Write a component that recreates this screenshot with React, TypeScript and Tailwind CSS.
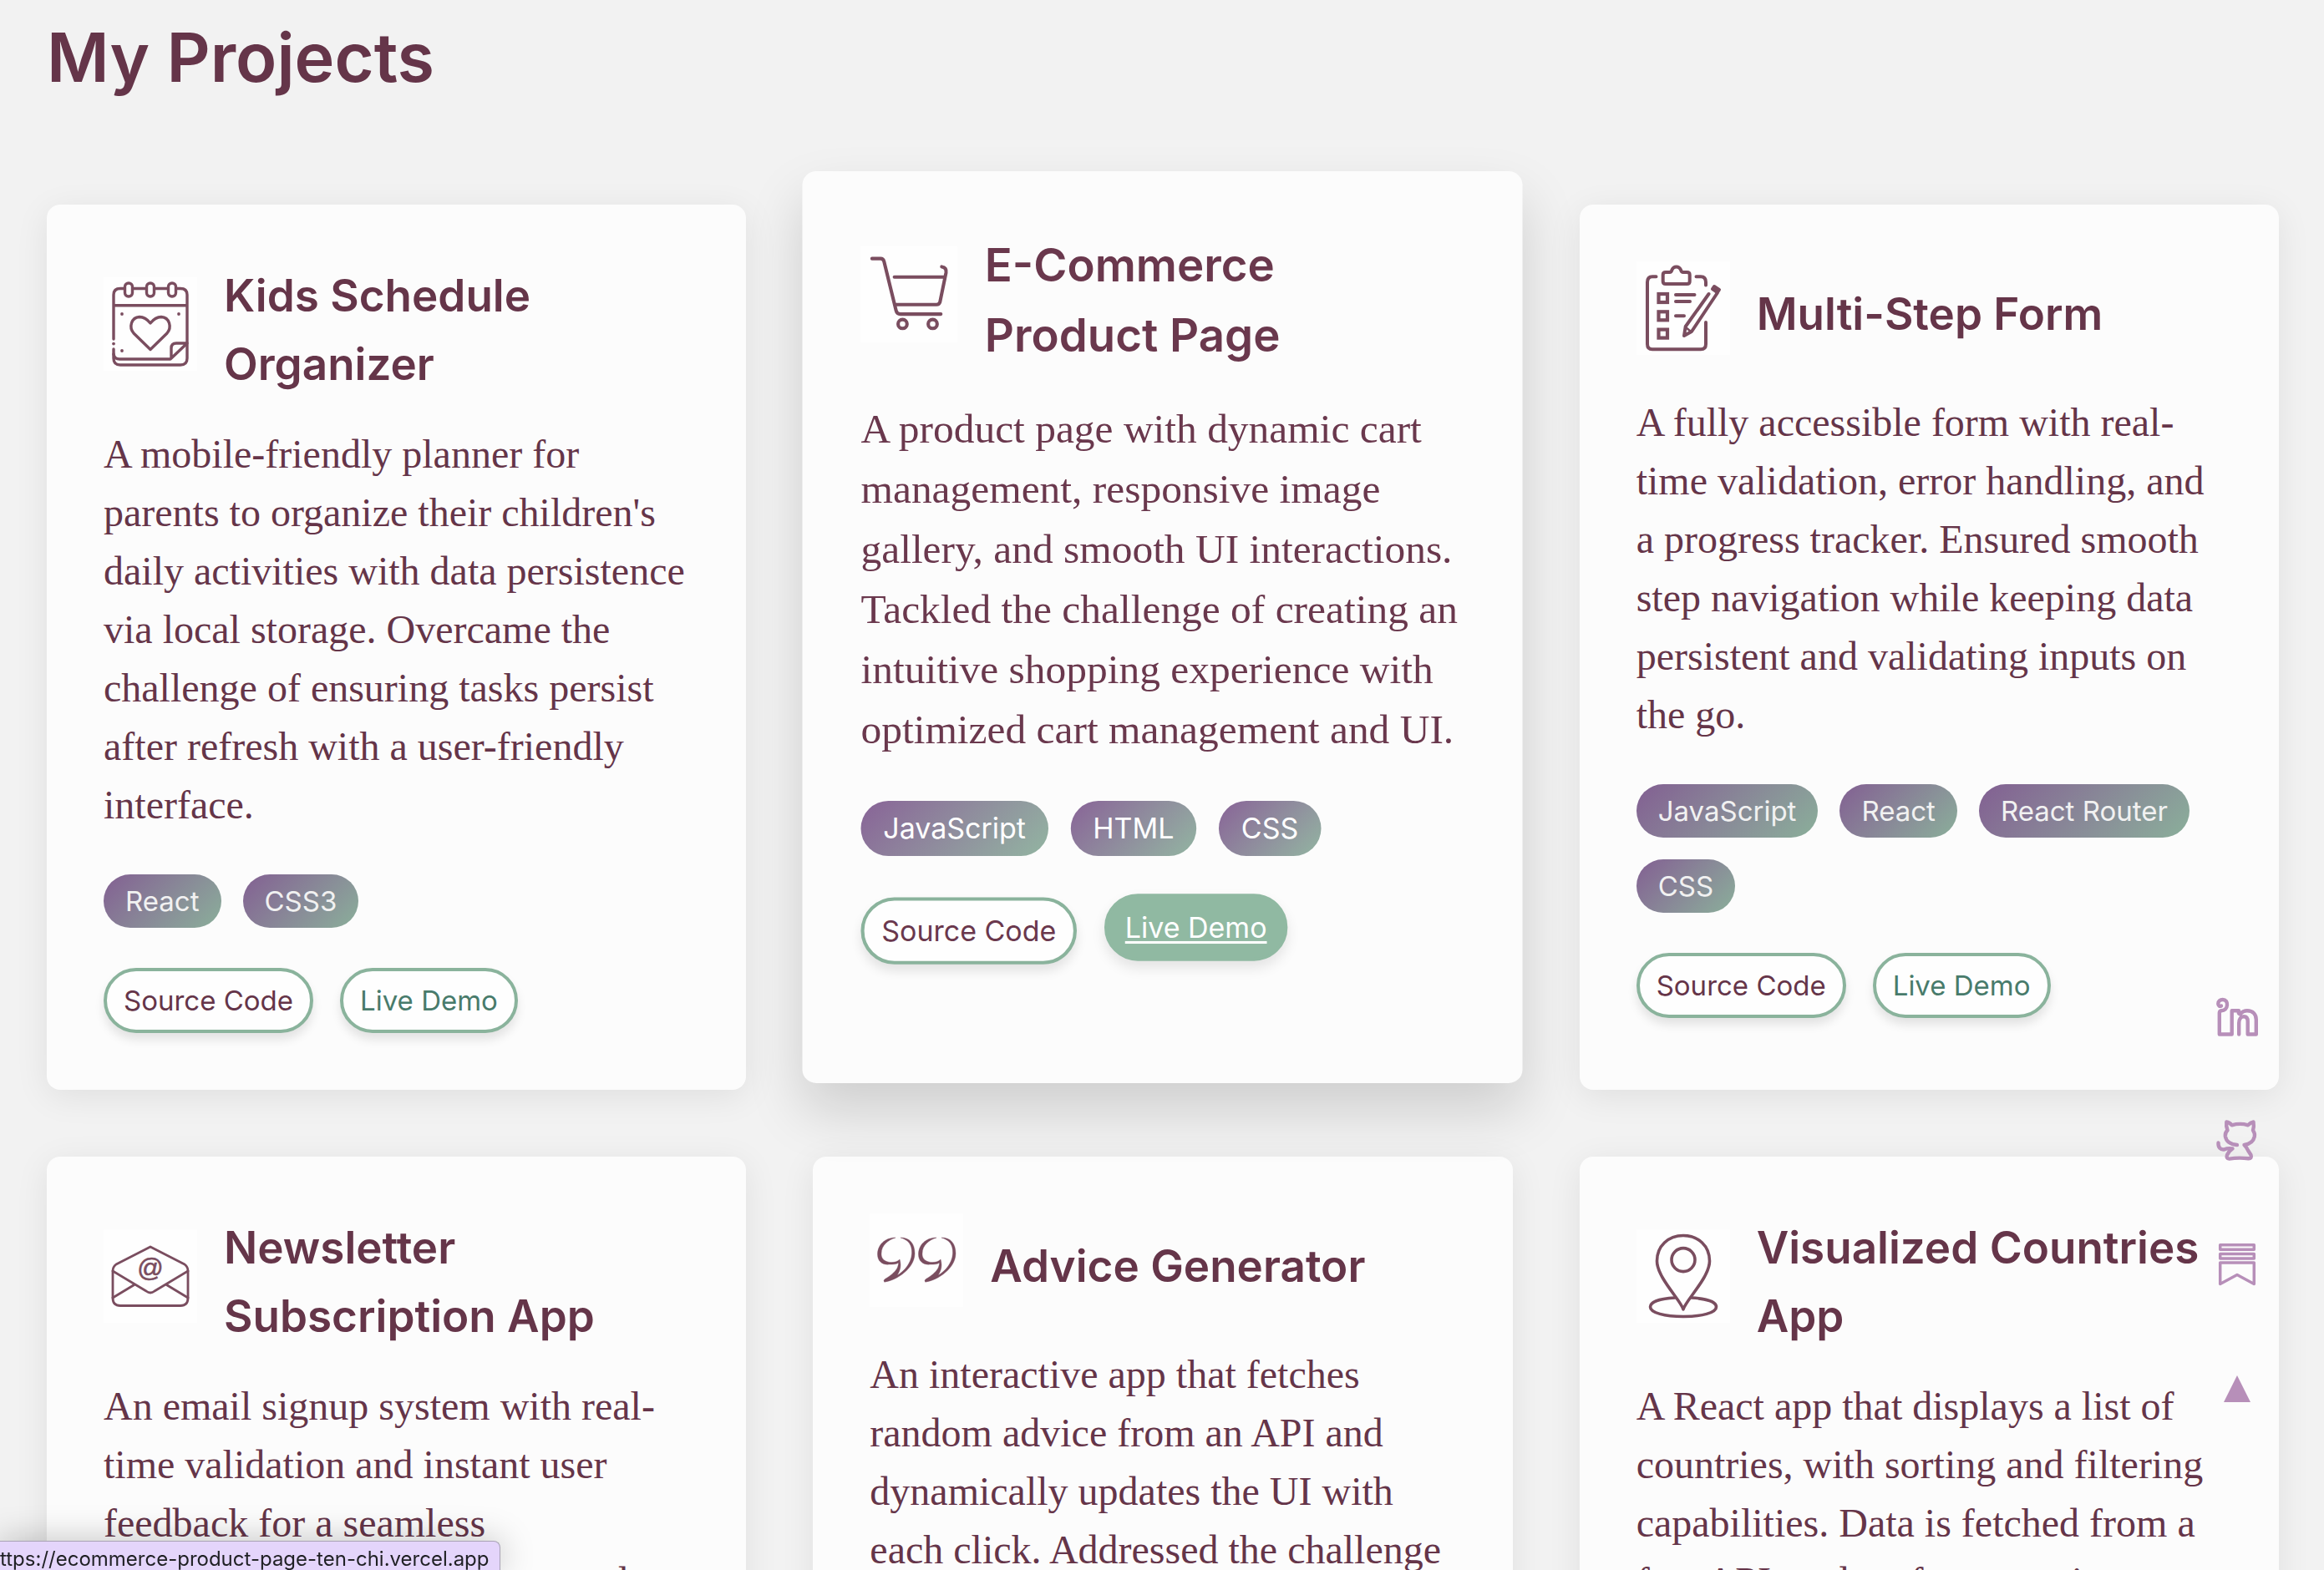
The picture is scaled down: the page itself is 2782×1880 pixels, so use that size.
import type { ReactNode } from "react";

type Project = {
  title: string;
  icon: ReactNode;
  description: string;
  tags: string[];
  active?: boolean;
};

function Glyph({ children }: { children: ReactNode }) {
  return (
    <svg
      viewBox="0 0 112 112"
      className="mb-3.5 size-28 shrink-0 bg-[#fefefe] text-[#7a4d5f]"
      fill="none"
      stroke="currentColor"
      strokeWidth="3.4"
      strokeLinecap="round"
      strokeLinejoin="round"
      aria-hidden="true"
    >
      {children}
    </svg>
  );
}

const calendar = (
  <Glyph>
    <path d="M12 74V21Q12 13.5 20 13.5H25M35 13.5H51M61 13.5H77M87 13.5H92Q100 13.5 100 21V97Q100 105 92 105H20Q12 105 12 97V86M12 33.7H100" />
    <rect x="25.500" y="7" width="9" height="16" rx="4.500" />
    <rect x="51.500" y="7" width="9" height="16" rx="4.500" />
    <rect x="77.500" y="7" width="9" height="16" rx="4.500" />
    <path d="M56 55Q50 47.500 43 47.500C33 48 30 60 36 67L56 86.500L76 67C82 60 79 48 69 47.500Q62 47.500 56 55Z" />
    <path d="M12 92Q13 98 19 98H80L100 79H87Q81 79 81 85V97" />
    <g fill="currentColor" stroke="none">
      <circle cx="12" cy="79.600" r="1.900" />
      <circle cx="22" cy="44" r="1.900" />
      <circle cx="90" cy="44" r="1.900" />
      <circle cx="22" cy="88" r="1.900" />
    </g>
  </Glyph>
);

const cart = (
  <Glyph>
    <g strokeWidth="4">
      <path d="M13 14.500H23Q26 14.500 27 18L41 75Q42 79 46 79H93" />
      <path d="M39 36H98M94 24Q100 25 99 31L92 65Q91 68 88 68H40" />
      <circle cx="48.500" cy="90.500" r="5.200" />
      <circle cx="83.500" cy="90.500" r="5.200" />
    </g>
  </Glyph>
);

const clipboard = (
  <Glyph>
    <g strokeWidth="4">
      <path d="M23.500 18.300H19Q13 18.300 13 25V99Q13 105.300 19 105.300H77Q83 105.300 83 99V73M71.500 18.300H77Q83 18.300 83 25V28.500" />
      <path d="M35 13H39.500Q42 13 42.500 10Q44 6.500 47.700 6.500T53 10Q53.500 13 56 13H60.500Q63.700 13 63.700 16V24Q63.700 27 60.500 27H35Q31.700 27 31.700 24V16Q31.700 13 35 13Z" />
      <path d="M47 40H69.500M47 48H64M47 65.300H57" />
      <path d="M86.500 39L58.700 78L57 89L66 84L96 39" />
      <path d="M59 79L65 84" strokeWidth="2.500" />
      <path d="M91 33L93 30L99 34L97 37ZM91 33L97 37.500" strokeWidth="4" />
    </g>
    <g strokeLinejoin="miter" strokeWidth="4.200">
      <rect x="26.500" y="39" width="10.500" height="10" />
      <rect x="26.500" y="60.300" width="10.500" height="10" />
      <rect x="26.500" y="81.600" width="10.500" height="10" />
    </g>
  </Glyph>
);

const envelope = (
  <Glyph>
    <g strokeWidth="2.800">
      <path d="M56 21L15 42Q11 45 11 50V82Q11 91.500 20 91.500H92Q101 91.500 101 82V50Q101 45 97 42Z" />
      <path d="M11 50L51 74Q56 78 61 74L101 50M11 82L37.500 66M101 82L74.500 66" />
    </g>
    <text x="56" y="57" textAnchor="middle" fontSize="31" strokeWidth="0.600" fill="currentColor" className="font-['Liberation_Sans',sans-serif]">@</text>
  </Glyph>
);

const ninePath =
  "M18 82C30 81 54 67 54 48C54 36 48 29 37 29C47 32 51 38 50.500 48C50 61 39 71 33 74C37 68 38 62 36 55C31 61 13 60 14 48C14 38 22 32 31 29C18 29 9.500 38 9.500 49C9.500 58 16 62 24 61C28 61 32 61 34.500 59C34.500 66 30 71 21 77C17 79 16 81 18 82Z";

const quotes = (
  <Glyph>
    <g fill="currentColor" strokeWidth="0.400">
      <path d={ninePath} />
      <path d={ninePath} transform="translate(49 0)" />
    </g>
  </Glyph>
);

const pin = (
  <Glyph>
    <g strokeWidth="3.600">
      <path d="M56 96C54 86 24.500 58 24.500 38C24.500 20 38 7.500 56 7.500S87.500 20 87.500 38C87.500 58 58 86 56 96Z" />
      <circle cx="56" cy="36.600" r="14" />
      <path d="M46 82C28 83 16.500 87 16.500 93C16.500 100 34 104.500 56 104.500S95.500 100 95.500 93C95.500 87 84 83 66 82" />
    </g>
  </Glyph>
);

const projects: Project[] = [
  {
    title: "Kids Schedule\nOrganizer",
    icon: calendar,
    description:
      "A mobile-friendly planner for\nparents to organize their children's\ndaily activities with data persistence\nvia local storage. Overcame the\nchallenge of ensuring tasks persist\nafter refresh with a user-friendly\ninterface.",
    tags: ["React", "CSS3"],
  },
  {
    title: "E-Commerce\nProduct Page",
    icon: cart,
    description:
      "A product page with dynamic cart\nmanagement, responsive image\ngallery, and smooth UI interactions.\nTackled the challenge of creating an\nintuitive shopping experience with\noptimized cart management and UI.",
    tags: ["JavaScript", "HTML", "CSS"],
    active: true,
  },
  {
    title: "Multi-Step Form",
    icon: clipboard,
    description:
      "A fully accessible form with real-\ntime validation, error handling, and\na progress tracker. Ensured smooth\nstep navigation while keeping data\npersistent and validating inputs on\nthe go.",
    tags: ["JavaScript", "React", "React Router", "CSS"],
  },
  {
    title: "Newsletter\nSubscription App",
    icon: envelope,
    description:
      "An email signup system with real-\ntime validation and instant user\nfeedback for a seamless\nsubscription experience, ensured",
    tags: ["JavaScript", "CSS"],
  },
  {
    title: "Advice Generator",
    icon: quotes,
    description:
      "An interactive app that fetches\nrandom advice from an API and\ndynamically updates the UI with\neach click. Addressed the challenge",
    tags: ["JavaScript", "CSS"],
  },
  {
    title: "Visualized Countries\nApp",
    icon: pin,
    description:
      "A React app that displays a list of\ncountries, with sorting and filtering\ncapabilities. Data is fetched from a\nfree API, and performance is",
    tags: ["React", "CSS"],
  },
];

function ProjectCard({ project }: { project: Project }) {
  const { active } = project;
  return (
    <article
      className={
        active
          ? "relative z-10 -translate-y-6 scale-[1.03] rounded-2xl bg-[#fcfcfc] p-[68px] text-[#6a384d] shadow-[0_32px_64px_rgba(0,0,0,0.15)]"
          : "rounded-2xl bg-[#fcfcfc] p-[68px] text-[#653549] shadow-[0_8px_40px_rgba(0,0,0,0.08)]"
      }
    >
      <header className="flex items-center gap-8">
        {project.icon}
        <h2 className="whitespace-pre text-[53px] leading-[82px] font-semibold">{project.title}</h2>
      </header>
      <p className="mt-8 whitespace-pre font-['Liberation_Serif',serif] text-[48px] leading-[70px]">
        {project.description}
      </p>
      <ul className="mt-12 flex flex-wrap gap-[26px]">
        {project.tags.map((tag) => (
          <li
            key={tag}
            className={
              active
                ? "rounded-full bg-linear-135 from-[#886397] to-[#92b5a1] px-[26px] text-[33px] leading-[64px] text-white"
                : "rounded-full bg-linear-135 from-[#825f92] to-[#8aaf9a] px-[26px] text-[33px] leading-[64px] text-[#f1f1f1]"
            }
          >
            {tag}
          </li>
        ))}
      </ul>
      <nav className="mt-12 flex gap-8">
        <a
          href="#source"
          className="rounded-full border-4 border-[#8ab39c] bg-[#fefefe] px-5 text-[33px] leading-[70px] shadow-[0_8px_12px_rgba(0,0,0,0.1)]"
        >
          Source Code
        </a>
        <a
          href="#demo"
          className={
            active
              ? "-translate-y-1 rounded-full border-4 border-[#90b9a2] bg-[#90b9a2] px-5 text-[33px] leading-[70px] text-white underline decoration-[3px] underline-offset-4 shadow-[0_8px_16px_rgba(0,0,0,0.1)]"
              : "rounded-full border-4 border-[#8ab39c] bg-[#fefefe] px-5 text-[33px] leading-[70px] text-[#487b6b] shadow-[0_8px_12px_rgba(0,0,0,0.1)]"
          }
        >
          Live Demo
        </a>
      </nav>
    </article>
  );
}

function LinkedInIcon() {
  return (
    <svg viewBox="0 0 50 50" className="size-[50px]" fill="none" stroke="currentColor" strokeWidth="4.400" strokeLinecap="round" strokeLinejoin="round" aria-hidden="true">
      <path d="M6 12.500C4 13.500 2.300 12 2.300 10C2.300 6.500 4.800 5 7.700 5C11.500 5 13.300 8 13 11.500C12.800 15.500 10 18 6 18.300Q4 18.600 3.800 21V46.500H18.700V18.300H27Q26 21.500 28.500 22.500Q32 18.300 37 18.300C44 18.300 47.800 22.500 47.800 29V46.500H37.700V31C37.700 27 35.800 25.200 33 25.200C29.500 25.200 27.200 28 27.200 33V46.500" />
    </svg>
  );
}

function CatIcon() {
  return (
    <svg viewBox="0 0 50 50" className="size-[50px]" fill="none" stroke="currentColor" strokeWidth="4.400" strokeLinecap="round" strokeLinejoin="round" aria-hidden="true">
      <path d="M25 31C18 30.500 12 27.500 10.800 20.500Q10.500 16 13.500 13.500Q11.500 9 12.300 3.500Q16 4 18.700 7.300Q28.500 4.500 38 7.300Q41 4 44.500 3.500Q45.500 9 44 13.500Q46.500 17 45.800 21C44.500 27 40 30 33.500 31Q36.500 34 38 37.500L41.500 43Q43 47.500 38.500 47.300Q27 45.800 15.500 47.600Q11.500 47.300 13 43Q15 38.500 19.500 35.500Q14 34.500 10 36.300C5 37.200 2.200 34 2.500 28.500" />
    </svg>
  );
}

function SubstackIcon() {
  return (
    <svg viewBox="0 0 48 52" className="h-[52px] w-12" fill="none" stroke="currentColor" strokeWidth="3.500" strokeLinejoin="round" aria-hidden="true">
      <rect x="3.700" y="2.700" width="40.600" height="5.600" />
      <rect x="3.700" y="13.500" width="40.600" height="5.600" />
      <path d="M3.700 24H44.300V49.500L24 38.500L3.700 49.500Z" />
    </svg>
  );
}

function TriangleIcon() {
  return (
    <svg viewBox="0 0 50 50" className="size-[50px]" fill="currentColor" aria-hidden="true">
      <path d="M25 9L41 41H9Z" />
    </svg>
  );
}

export default function App() {
  return (
    <div className="relative h-screen overflow-hidden bg-[#f2f2f2] font-['Inter',sans-serif]">
      <main className="pr-[54px] pl-14">
        <h1 className="pt-[9px] text-[81px] leading-[120px] font-semibold text-[#653549]">My Projects</h1>
        <section className="mt-[116px] grid grid-cols-3 gap-20">
          {projects.map((project) => (
            <ProjectCard key={project.title} project={project} />
          ))}
        </section>
      </main>

      <aside className="fixed right-[79px] bottom-48 z-20 flex flex-col items-center gap-[98px] text-[#b78fb9]">
        <a href="#linkedin" aria-label="LinkedIn">
          <LinkedInIcon />
        </a>
        <a href="#github" aria-label="GitHub">
          <CatIcon />
        </a>
        <a href="#substack" aria-label="Substack">
          <SubstackIcon />
        </a>
        <a href="#top" aria-label="Back to top">
          <TriangleIcon />
        </a>
      </aside>

      <div className="fixed bottom-0 left-0 z-20 rounded-tr-lg border-t border-r border-[#a9a3b5] bg-[#e4d5fb] pt-2 pr-3 text-2xl leading-[26px] text-[#1f2024] shadow-[0_0_40px_rgba(0,0,0,0.25)]">
        ttps://ecommerce-product-page-ten-chi.vercel.app
      </div>
    </div>
  );
}
